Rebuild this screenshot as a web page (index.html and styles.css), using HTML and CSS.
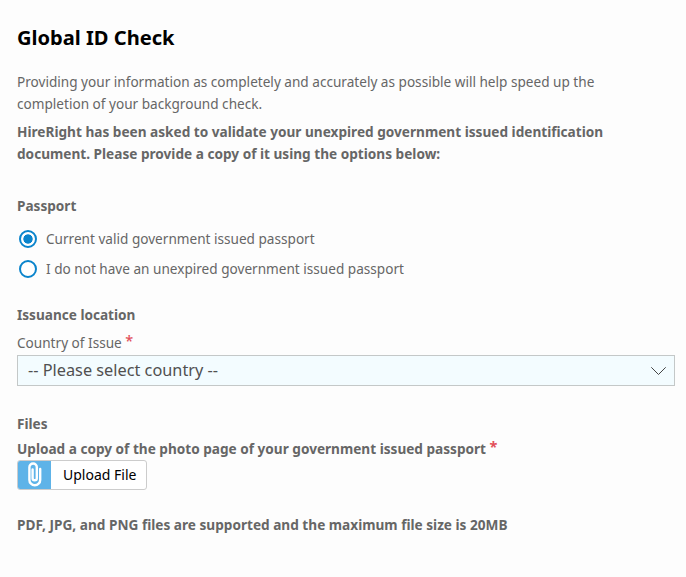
FILE: index.html
```html
<!DOCTYPE html>
<html lang="en">
<head>
<meta charset="utf-8">
<title>Global ID Check</title>
<link rel="stylesheet" href="styles.css">
</head>
<body>
<main class="page">
  <h1 class="title">Global ID Check</h1>
  <p class="intro">Providing your information as completely and accurately as possible will help speed up the<br>completion of your background check.</p>
  <p class="notice">HireRight has been asked to validate your unexpired government issued identification<br>document. Please provide a copy of it using the options below:</p>
  <section class="passport">
    <h2 class="heading">Passport</h2>
    <label class="option"><input class="radio" type="radio" name="passport" checked><span>Current valid government issued passport</span></label>
    <label class="option"><input class="radio" type="radio" name="passport"><span>I do not have an unexpired government issued passport</span></label>
  </section>
  <section class="location">
    <h2 class="heading">Issuance location</h2>
    <div class="label">Country of Issue <span class="required">*</span></div>
    <div class="select"><span>-- Please select country --</span>
      <svg class="chevron" width="16" height="10" viewBox="0 0 16 10"><path d="M1.3 1.3l7.2 7.2 7.2-7.2" fill="none" stroke="#444" stroke-width="1"/></svg>
    </div>
  </section>
  <section class="files">
    <h2 class="heading">Files</h2>
    <div class="label strong">Upload a copy of the photo page of your government issued passport <span class="required">*</span></div>
    <button class="upload" type="button"><span class="clip"><svg width="14" height="25" viewBox="0 0 14 25"><path d="M4.6 7.5v8.7a2.1 2.1 0 0 0 4.2 0V5.2a3.7 3.7 0 0 0-7.4 0v12.7a5.4 5.4 0 0 0 10.8 0V7" fill="none" stroke="#fff" stroke-width="2.4" stroke-linecap="round"/></svg></span><span class="upload-text">Upload File</span></button>
  </section>
  <p class="support">PDF, JPG, and PNG files are supported and the maximum file size is 20MB</p>
</main>
</body>
</html>
```
FILE: styles.css
```css
* { box-sizing: border-box; }
body { margin: 0; background: #fdfdfd; color: #666; font: 13.6px/22px "Noto Sans", sans-serif; }
h1, h2, p { margin: 0; }
.page { padding: 24px 11px 0 17px; white-space: nowrap; }
.title { font-size: 20.1px; line-height: 28px; color: #000; }
.intro { margin-top: 19px; }
.notice { margin-top: 6px; font-weight: 700; font-size: 13.63px; }
.passport { margin-top: 30px; }
.heading { font-size: 13.6px; line-height: 22px; }
.passport .heading { margin-bottom: 7px; }
.option { display: flex; align-items: center; height: 30px; gap: 8px; padding-left: 2px; }
.radio { appearance: none; width: 18px; height: 18px; margin: 0 1px 0 0; border: 2px solid #0a84cc; border-radius: 50%; background: #fff; }
.radio:checked { background: radial-gradient(circle, #0a84cc 4.3px, #fff 5px); }
.location { margin-top: 20px; }
.label { margin-top: 6px; }
.strong { font-weight: 700; margin-top: 3px; font-size: 13.62px; }
.required { display: inline-block; color: #e2505a; font-size: 14.5px; font-weight: 500; line-height: 17px; height: 20px; vertical-align: top; }
.strong .required { font-weight: 700; }
.select { display: flex; align-items: center; justify-content: space-between; height: 31px; margin-top: 1px; padding: 0 8px 0 10px; border: 1px solid #c4c8c8; background: #f3fcff; font-size: 16.3px; line-height: 22px; color: #505050; }
.select span { margin-top: -2px; }
.files { margin-top: 27px; }
.upload { display: flex; align-items: center; width: 130px; height: 30px; padding: 0; border: 1px solid #ccc; border-radius: 3px; background: #fff; color: #000; font: 14px/22px "Noto Sans", sans-serif; overflow: hidden; }
.clip { display: flex; align-items: center; justify-content: center; width: 33px; height: 28px; padding: 0 0 2px 1px; background: #5eb3e8; }
.upload-text { margin-left: 12px; }
.support { margin-top: 24px; font-weight: 700; font-size: 13.63px; }
```
